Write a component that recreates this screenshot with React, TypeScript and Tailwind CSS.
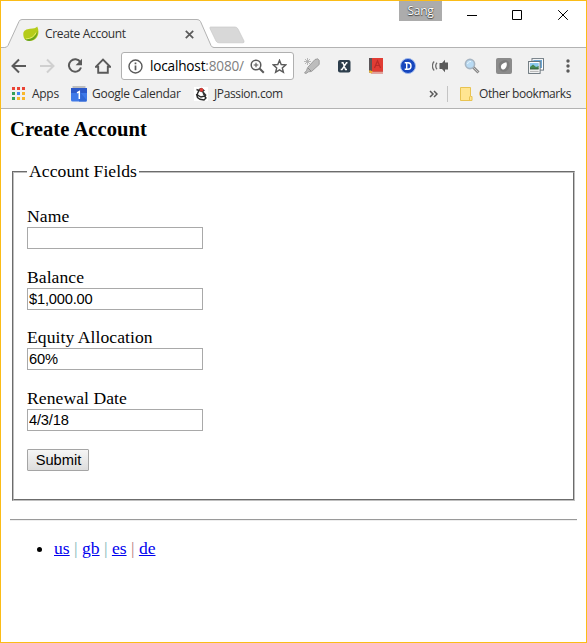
import type { ReactNode } from 'react';

const Slot = ({ children, className = 'w-8' }: { children: ReactNode; className?: string }) => (
  <div className={`flex shrink-0 items-center justify-center ${className}`}>{children}</div>
);

const Icon = ({ children, className = '' }: { children: ReactNode; className?: string }) => (
  <svg width="16" height="16" viewBox="0 0 16 16" className={`block shrink-0 ${className}`} fill="none">
    {children}
  </svg>
);

function TitleBar() {
  return (
    <div className="relative h-[47px] border-b border-[#b3b3b3]">
      <svg width="260" height="47" viewBox="0 0 260 47" className="absolute left-0 top-0 overflow-visible" fill="none">
        <path d="M0 47V46.5H3.5Q6 46.500 7 44.500L18 20.500Q18.800 18.500 21 18.500H196Q198.500 18.500 199.500 20.500L210 44.500Q211 46.500 213 46.500V47.500H0Z" fill="#f1f1f1" />
        <path d="M0 46.500H3.500Q6 46.500 7 44.500L18 20.500Q18.800 18.500 21 18.500H196Q198.500 18.500 199.500 20.500L210 44.500Q211 46.500 213 46.500" stroke="#b3b3b3" />
        <path d="M209.500 26H234Q236 26 237 28L243 40Q243.500 41.800 242 41.800H218Q216 41.800 215 40L209 27.500Q208.500 26 209.500 26Z" fill="#d8d8d8" stroke="#c8c8c8" strokeWidth=".7" />
      </svg>
      <div className="relative flex h-[47px]">
        <div className="mt-[19px] flex h-7 w-[196px] items-center pl-[22px]">
          <Icon>
            <path d="M.3 8.500C0 4.500 3.500 3 7 2.700C10.500 2.400 13 2.400 14.200.5C16.500 5 15.500 10.500 12 13.200C9 15.500 4.500 15.400 2 13.500C1 12.500.4 10.600.3 8.500Z" fill="#b5cc1a" />
            <path d="M2.200 13C6.500 13.600 12.700 12 14.300 5C15.200 10.200 11.300 14.600 6.500 14.900C4.700 15 3 14.500 2.200 13Z" fill="#69a320" />
            <path d="M3 12.900C8 12.700 11.300 10.500 13 6.600" stroke="#e2ed67" strokeWidth="1" />
          </Icon>
          <span className="ml-[6px] w-[139px] whitespace-nowrap">Create Account</span>
          <svg width="9" height="9" viewBox="0 0 9 9" className="ml-[1px] shrink-0"><path d="M.8.8L8.200 8.200M8.200.8L.8 8.200" stroke="#5a5a5a" strokeWidth="1.700" /></svg>
        </div>
        <div className="ml-auto flex">
          <div className="flex h-5 w-[43px] items-center justify-center bg-[#acacac] text-white [text-shadow:0_0_1px_#333,0_1px_1px_#444]">Sang</div>
          <div className="flex h-[29px] w-[144px] text-black">
            <svg width="144" height="29" viewBox="0 0 144 29" fill="none" stroke="currentColor">
              <path d="M25 14.500H35M70.500 9.500H79.500V18.500H70.500ZM116.200 9.200L125.800 18.800M125.800 9.200L116.200 18.800" />
            </svg>
          </div>
        </div>
      </div>
    </div>
  );
}

function Toolbar() {
  return (
    <div className="flex h-9 items-center pl-1">
      <Slot className="w-7"><Icon><path d="M15 8H2M8 1.500L1.500 8L8 14.500" stroke="#5a5a5a" strokeWidth="2" /></Icon></Slot>
      <Slot className="w-7"><Icon><path d="M1 8H14M8 1.500L14.500 8L8 14.500" stroke="#d0d0d0" strokeWidth="2" /></Icon></Slot>
      <Slot className="w-7"><Icon><path d="M13.400 4.200A6.200 6.200 0 1 0 14 9.500" stroke="#5a5a5a" strokeWidth="2" /><path d="M15 .8V7.200H8.600Z" fill="#5a5a5a" /></Icon></Slot>
      <Slot className="w-7"><Icon><path d="M.8 8.800L8 1.600L15.200 8.800H12.800V14.700H3.200V8.800Z" stroke="#5a5a5a" strokeWidth="1.900" /></Icon></Slot>
      <div className="ml-1 flex h-7 w-[173px] shrink-0 items-center rounded-[3px] border border-[#b0b0b0] bg-white">
        <svg width="15" height="15" viewBox="0 0 15 15" className="ml-[6px] shrink-0" fill="none">
          <circle cx="7.500" cy="7.500" r="6.500" stroke="#5a5a5a" strokeWidth="1.400" />
          <path d="M7.500 6.500V11.200M7.500 3.600V5.200" stroke="#5a5a5a" strokeWidth="1.700" />
        </svg>
        <span className="ml-[7px] w-[94px] whitespace-nowrap text-[13.600px] tracking-[-0.180px] text-black">localhost<span className="text-[#808080]">:8080/</span></span>
        <svg width="15" height="15" viewBox="0 0 15 15" className="ml-[6px] shrink-0" fill="none" stroke="#5a5a5a">
          <circle cx="6" cy="6" r="4.800" strokeWidth="1.500" /><path d="M9.500 9.500L13.800 13.800" strokeWidth="2" /><path d="M3.700 6H8.300M6 3.700V8.300" strokeWidth="1.100" />
        </svg>
        <svg width="15" height="15" viewBox="0 0 15 15" className="ml-[7px] shrink-0" fill="none"><path d="M7.500 1.300L9.200 5.500L13.800 5.900L10.300 8.900L11.400 13.300L7.500 10.900L3.600 13.300L4.700 8.900L1.200 5.900L5.800 5.500Z" stroke="#5a5a5a" strokeWidth="1.400" /></svg>
      </div>
      <div className="ml-[2px] flex">
        <Slot><Icon>
          <path d="M13.800.8L15.200 2.500V6.500L7.500 13.500L4.500 13.800L2 15.500L.5 15L2.500 12.600L3.600 9.500L11 1.500Z" fill="#bdbdbd" stroke="#909090" strokeWidth=".8" />
          <path d="M4 10L7 13" stroke="#8c8c8c" />
          <path d="M3.500 0V7M0 3.500H7M1 1L6 6M6 1L1 6" stroke="#aaa" strokeWidth=".8" />
        </Icon></Slot>
        <Slot><Icon>
          <rect x="2" y="2" width="12.500" height="12.500" rx="2" fill="#2d3e4c" />
          <path d="M5.500 4.800H7L9.500 11.500H11M11.500 4.800H10.500L6 11.500H4.700" stroke="#fff" strokeWidth="1.400" />
        </Icon></Slot>
        <Slot><Icon>
          <path d="M1 0H4V15H1Z" fill="#5b5558" /><path d="M4 0H15V13H4Z" fill="#e13c34" />
          <path d="M1.500 13H14.500V15H1.500Z" fill="#f4eae0" /><path d="M3 15H15M4 13.500H15" stroke="#c9352b" strokeWidth=".8" />
          <path d="M6.500 10L9.500 2.800L12.500 10M7.700 7.500H11.300" stroke="#b92b28" strokeWidth="1.200" />
          <path d="M1.500 12L5 13.600L3 15.500L1 14Z" fill="#f0b32b" />
        </Icon></Slot>
        <Slot><Icon>
          <circle cx="8" cy="8" r="7.500" fill="#1646bd" stroke="#9db8ed" />
          <path d="M5.700 4.800H8C10 4.800 11 6 11 8S10 11.200 8 11.200H5.700M6.700 4.800V11.200M4.700 4.800H8M4.700 11.200H8" stroke="#fff" strokeWidth="1.400" />
        </Icon></Slot>
        <Slot><Icon>
          <path d="M7.500 5H10L13 1.800V4.500H16V11.500H13V14.200L10 11H7.500Z" fill="#5a5a5a" />
          <path d="M2.200 3.500C-.2 5.500-.2 10.500 2.200 12.500M5 4.800C3.300 6.500 3.300 9.500 5 11.200" stroke="#6b6b6b" strokeWidth="1.300" />
        </Icon></Slot>
        <Slot><Icon className="-ml-px">
          <path d="M9 9L14.500 14.500" stroke="#898989" strokeWidth="3" /><path d="M9.500 9.500L14 14" stroke="#c8c8c8" />
          <circle cx="6" cy="6" r="4.600" fill="#b8daf3" stroke="#a7b5c2" strokeWidth="1.600" /><path d="M3.500 6C4 4.200 5 3.500 7 3.500" stroke="#eaf7ff" />
        </Icon></Slot>
        <Slot><Icon>
          <rect width="16" height="16" rx="2" fill="#8b8b8b" /><path d="M3 10C1.800 5 5 2.300 9 2.200C15 2 14.500 10 11 12.500C8 15 4 13.500 3 10Z" fill="#7c7c7c" />
          <path d="M10.300 4.200C11.800 7 9.800 11.600 6.500 11.600C3.200 9.200 5.200 5 10.300 4.200Z" fill="#fff" />
        </Icon></Slot>
        <Slot><Icon>
          <rect x="4" y=".6" width="11.500" height="11.500" fill="#fff" stroke="#707b83" /><path d="M5.300 2H14V10H5.300Z" fill="#6ca8d6" />
          <rect x=".6" y="3.500" width="11.500" height="11.900" fill="#fff" stroke="#68737a" /><path d="M2 5H10.700V9H2Z" fill="#8bc8ee" />
          <path d="M2 9L5 6.500L8 9L10.700 8V11H2Z" fill="#45864f" /><path d="M2 11H10.700" stroke="#31573c" /><path d="M2 13.300H10.700" stroke="#aaa" />
        </Icon></Slot>
        <Slot><svg width="4" height="14" viewBox="0 0 4 14" fill="#5a5a5a"><circle cx="2" cy="2" r="1.700" /><circle cx="2" cy="7" r="1.700" /><circle cx="2" cy="12" r="1.700" /></svg></Slot>
      </div>
    </div>
  );
}

function Bookmarks() {
  return (
    <div className="flex h-[25px] items-center whitespace-nowrap border-b border-[#b3b3b3] pb-[5px] pl-[11px] tracking-[-0.280px]">
      <svg width="13" height="13" viewBox="0 0 13 13" className="shrink-0">
        <path d="M0 0H3V3H0ZM5 0H8V3H5ZM10 0H13V3H10Z" fill="#ea4335" />
        <path d="M0 5H3V8H0ZM0 10H3V13H0Z" fill="#34a058" />
        <path d="M5 5H8V8H5Z" fill="#4285f4" />
        <path d="M10 5H13V8H10ZM5 10H8V13H5ZM10 10H13V13H10Z" fill="#f9b72b" />
      </svg>
      <span className="ml-[7px] w-[39px]">Apps</span>
      <Icon>
        <path d="M1.500 0H14.500V4H1.500Z" fill="#bdbdbd" /><path d="M0 2H16V14Q16 15.500 14.500 15.500H1.500Q0 15.500 0 14Z" fill="#3f79e8" />
        <path d="M0 2H16V7H0Z" fill="#2c59c9" /><path d="M9 6L15.500 14V15.500H8Z" fill="#3268d5" />
        <path d="M6 6.800L8.300 5.500V13" stroke="#fff" strokeWidth="1.500" />
      </Icon>
      <span className="ml-[5px] w-[102px]">Google Calendar</span>
      <Icon className="-ml-px">
        <rect x="1" y="1" width="14" height="14" fill="#fff" />
        <path d="M3.500 3.500L6 4.500L4.500 7.500L4.500 9L8 11L11.500 10L13 12L11 14L7 13.300L4.500 11.500L3.500 8" stroke="#292929" strokeWidth="1.400" />
        <path d="M5.500 3L8.500 1.800L12 4.500L10.500 5.500L13.500 9L12.500 11L10 8.500L9.500 6.500L6 5Z" fill="#333" />
        <circle cx="8.500" cy="3.800" r="1.900" fill="#df3b35" />
      </Icon>
      <span className="ml-[5px] tracking-[-0.380px]">JPassion.com</span>
      <div className="ml-auto flex items-center pr-[14px]">
        <svg width="9" height="8" viewBox="0 0 9 8" fill="none"><path d="M1 1L4 4L1 7M5 1L8 4L5 7" stroke="#5a5a5a" strokeWidth="1.500" /></svg>
        <div className="ml-[9px] h-4 w-px bg-[#c4c4c4]" />
        <svg width="13" height="14" viewBox="0 0 13 14" className="ml-3"><path d="M.5.500H10.500V9.500H12V13.500H.5Z" fill="#ffe591" stroke="#e8c351" /><path d="M9.500 9.500V13.500" stroke="#e8c351" /></svg>
        <span className="ml-[6px] w-[93px] tracking-[-0.440px]">Other bookmarks</span>
      </div>
    </div>
  );
}

const fields = [
  { label: 'Name', value: '' },
  { label: 'Balance', value: '$1,000.00' },
  { label: 'Equity Allocation', value: '60%' },
  { label: 'Renewal Date', value: '4/3/18' },
];

function AccountPage() {
  return (
    <main className="px-[9px] pt-2 font-['Liberation_Serif',serif] text-[17.6px] leading-5 text-black">
      <h3 className="h-6 text-[20.6px] font-bold leading-6 tracking-[0.050px]">Create Account</h3>
      <form className="mt-[21px]">
        <fieldset className="mx-[2px] h-[339px] border-2 border-[#c0c0c0] px-[13px] [border-style:groove]">
          <legend className="h-5 px-[2px] leading-[18px] tracking-[0.070px]">Account Fields</legend>
          <div className="flex flex-col gap-[17.600px] pt-6">
            {fields.map(({ label, value }) => (
              <label key={label} className="block h-[43px] leading-5 tracking-[0.060px]">
                {label}
                <input defaultValue={value} className="mt-px block h-[22px] w-44 border border-[#a9a9a9] bg-white px-px font-['Liberation_Sans',sans-serif] text-[14.700px] tracking-[-0.200px] outline-none" />
              </label>
            ))}
          </div>
          <button type="button" className="mt-[18px] flex h-[22px] w-[62px] items-center justify-center rounded-[1px] border border-[#a5a5a5] bg-linear-to-b from-[#f6f6f6] to-[#dddddd] pl-px font-['Liberation_Sans',sans-serif] text-[14.700px]">Submit</button>
        </fieldset>
      </form>
      <hr className="mt-[18px] h-[2px] border-y border-t-[#9a9a9a] border-b-[#eeeeee]" />
      <ul className="mt-[17px] list-disc pl-11">
        <li>
          {['us', 'gb', 'es', 'de'].map((locale, index) => (
            <span key={locale}>
              {index > 0 && <span className={index === 3 ? 'text-[#b88080]' : 'text-[#80b8b8]'}> | </span>}
              <a href="#" className="text-[#0000ee] underline">{locale}</a>
            </span>
          ))}
        </li>
      </ul>
    </main>
  );
}

export default function App() {
  return (
    <div className="h-[643px] w-[587px] overflow-hidden border border-[#fbbc17] bg-white">
      <header className="bg-[#f1f1f1] font-['Open_Sans',sans-serif] text-[12px] leading-4 tracking-[-0.320px] text-[#303030]">
        <div className="bg-white"><TitleBar /></div>
        <Toolbar />
        <Bookmarks />
      </header>
      <AccountPage />
    </div>
  );
}
